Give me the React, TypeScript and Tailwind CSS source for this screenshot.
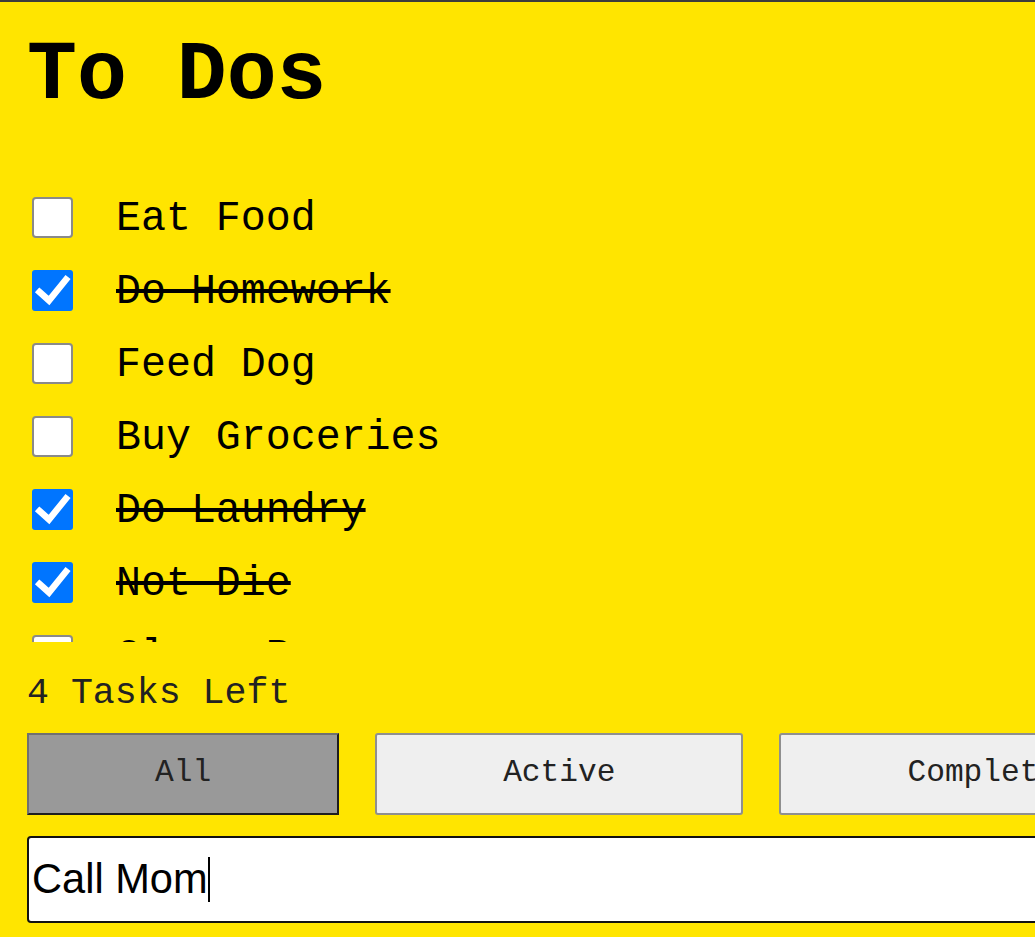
import React from "react";

const todos = [
  { text: "Eat Food", done: false },
  { text: "Do Homework", done: true },
  { text: "Feed Dog", done: false },
  { text: "Buy Groceries", done: false },
  { text: "Do Laundry", done: true },
  { text: "Not Die", done: true },
  { text: "Clean Room", done: false },
];

function Box({ checked }: { checked: boolean }) {
  if (checked) {
    return (
      <div className="w-[41px] h-[41px] shrink-0 rounded-[3px] bg-[#0075ff] flex items-center justify-center">
        <svg width="41" height="41" viewBox="0 0 41 41">
          <path d="M7.5 22 L17 30.5 L34 9.5" fill="none" stroke="#fff" strokeWidth="6.5" strokeLinecap="square" strokeLinejoin="miter" />
        </svg>
      </div>
    );
  }
  return <div className="w-[41px] h-[41px] shrink-0 rounded-[4px] bg-white border-2 border-[#8a8a8a]" />;
}

export default function App() {
  return (
    <div className="w-[1035px] h-[937px] overflow-hidden bg-[#ffe500] border-t-2 border-[#3c3c3c] font-['Liberation_Mono',monospace] text-black">
      <div className="pl-[27px]">
        <h1 className="pt-[33px] text-[83.2px] leading-none font-bold h-[179px]">To Dos</h1>
        <ul className="h-[461px] overflow-hidden pl-[5px]">
          {todos.map((t) => (
            <li key={t.text} className="h-[73px] flex items-center">
              <Box checked={t.done} />
              <span
                className={
                  "ml-[43px] pt-[3px] text-[41.6px] leading-none " +
                  (t.done ? "line-through decoration-[4px] decoration-black" : "")
                }
              >
                {t.text}
              </span>
            </li>
          ))}
        </ul>
        <div className="mt-[34px] text-[36.6px] leading-none text-[#222]">4 Tasks Left</div>
        <div className="mt-[20px] flex gap-[36px] w-[1300px]">
          <button className="h-[82px] px-[126px] bg-[#999999] border-2 border-t-[#707070] border-l-[#707070] border-b-[#1e1e1e] border-r-[#1e1e1e] text-[31.2px] text-[#222] font-['Liberation_Mono',monospace]">
            All
          </button>
          <button className="h-[82px] px-[126px] bg-[#efefef] border-2 border-[#8f8f8f] rounded-[3px] text-[31.2px] text-[#222] font-['Liberation_Mono',monospace]">
            Active
          </button>
          <button className="h-[82px] px-[126px] bg-[#efefef] border-2 border-[#8f8f8f] rounded-[3px] text-[31.2px] text-[#222] font-['Liberation_Mono',monospace]">
            Complete
          </button>
        </div>
        <div className="mt-[21px] w-[1300px] h-[87px] bg-white border-2 border-[#111] rounded-[4px] flex items-center pl-[3px] font-['Liberation_Sans',Arial,sans-serif] text-[41.6px] leading-none">
          <span>Call Mom</span>
          <span className="inline-block w-[2px] h-[45px] bg-black" />
        </div>
      </div>
    </div>
  );
}
